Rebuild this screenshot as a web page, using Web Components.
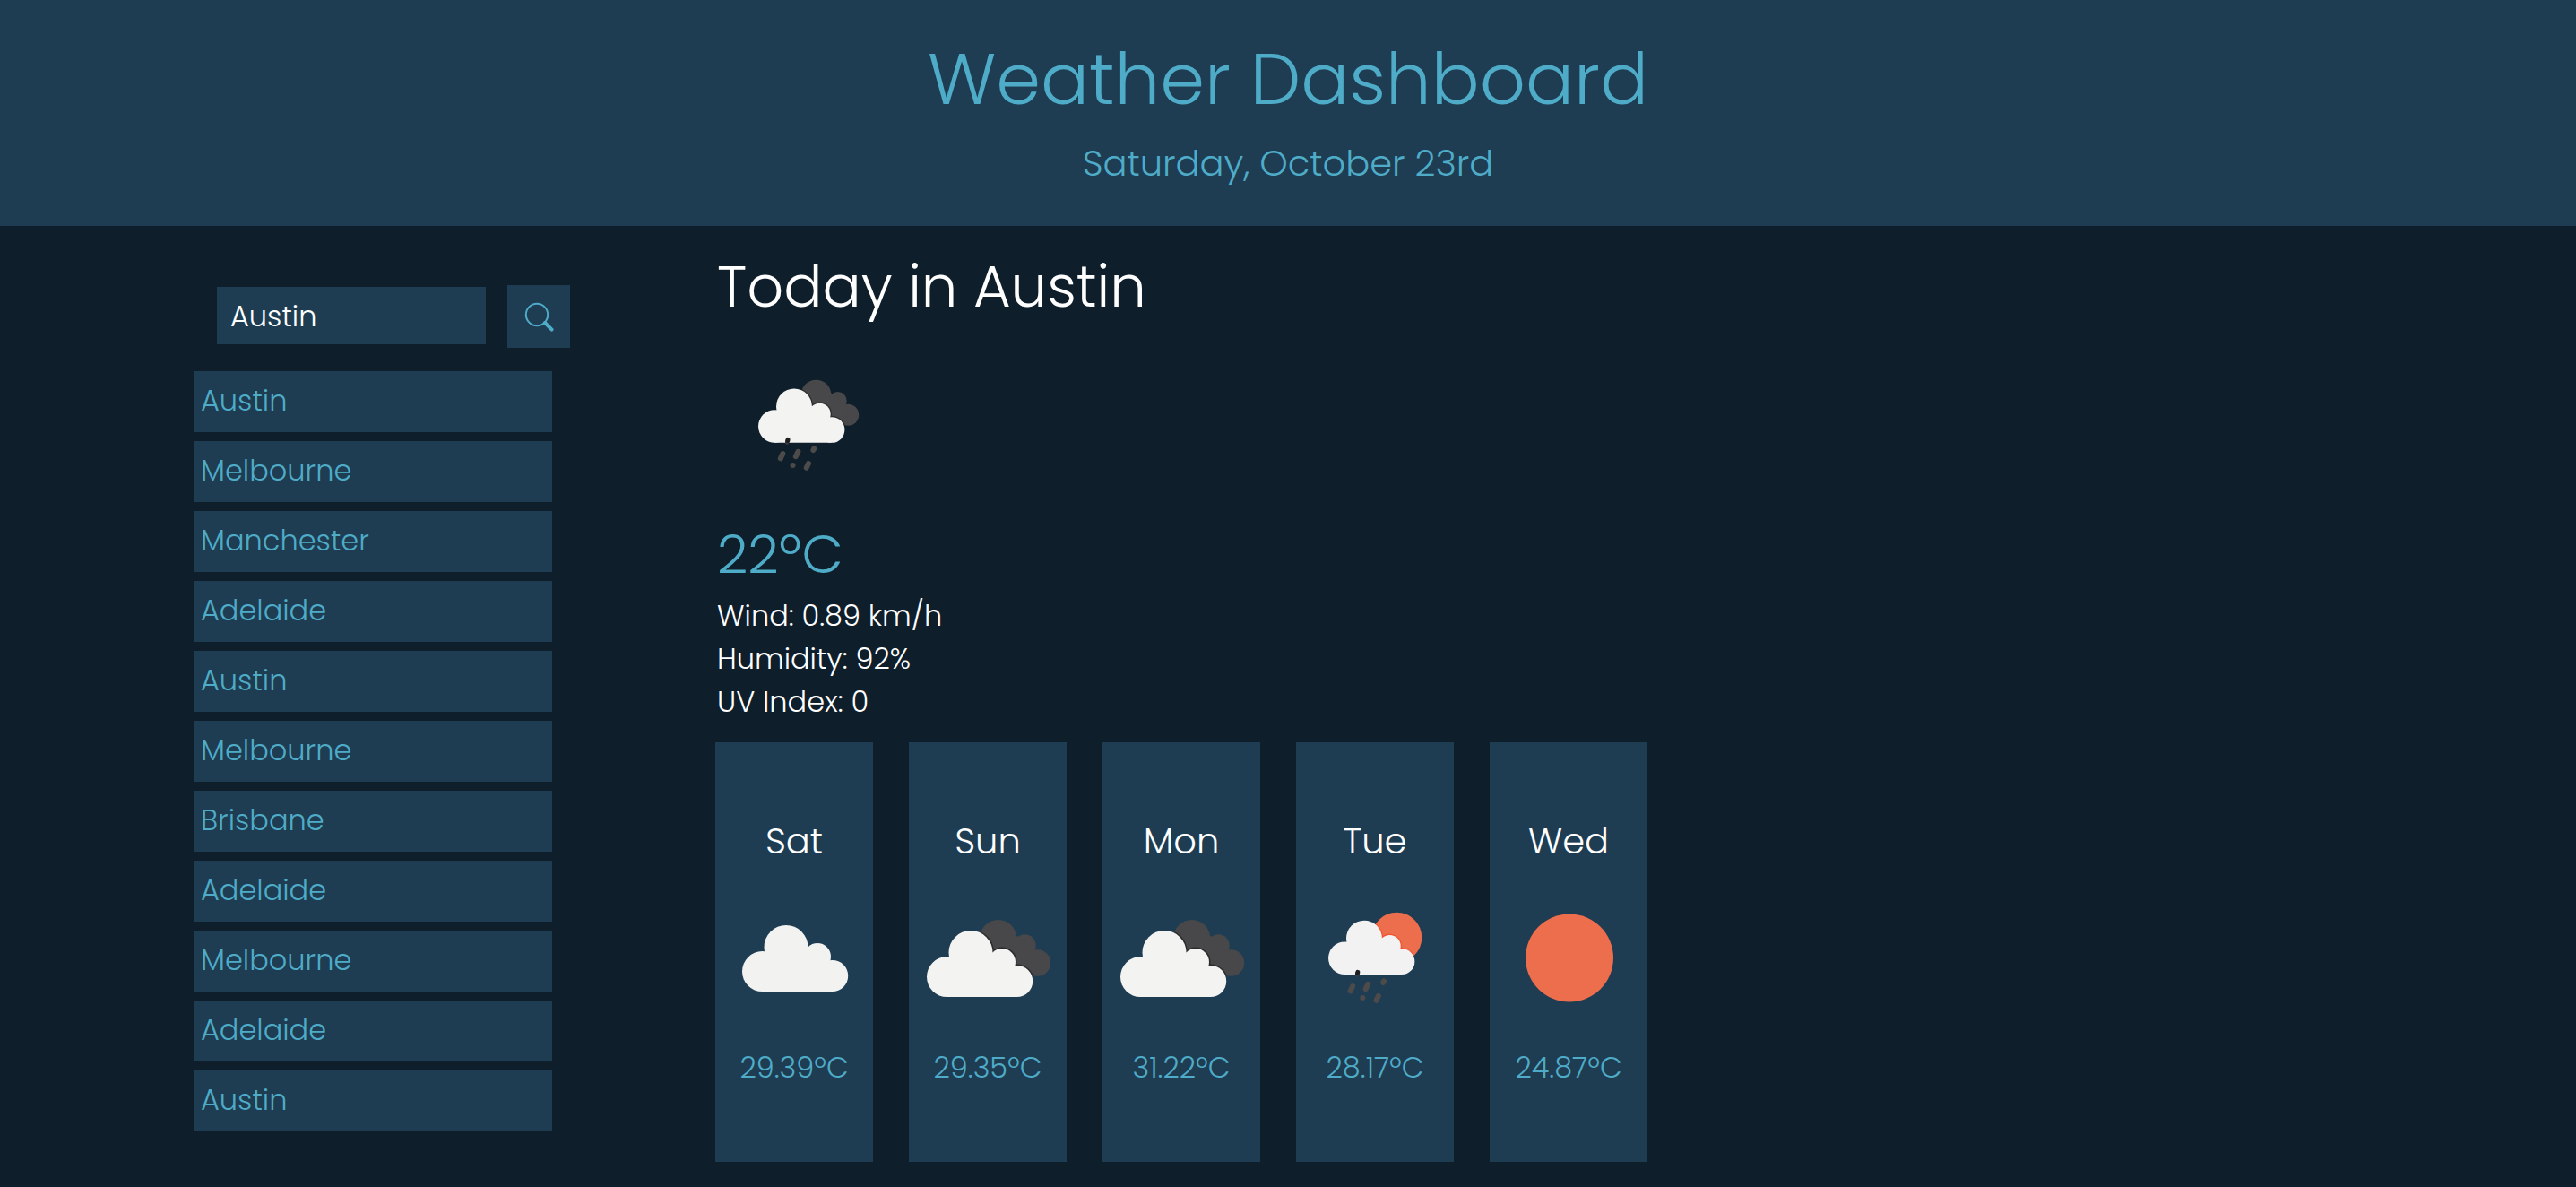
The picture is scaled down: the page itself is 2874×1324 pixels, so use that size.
<!DOCTYPE html>
<html lang="en">
<head>
<meta charset="utf-8">
<title>Weather Dashboard</title>
<style>
  :root {
    --ink: #0e1e2a;
    --panel: #1e3d52;
    --accent: #4facc8;
    --text-xl: 80px;
    --text-lg: 64px;
    --text-md: 40px;
    --text-sm: 32px;
  }
  body {
    margin: 0;
    min-height: 100vh;
    background: var(--ink);
    color: #fff;
    font-family: Poppins, Inter, "Open Sans", sans-serif;
    font-weight: 300;
  }
</style>
</head>
<body>
<weather-app></weather-app>

<template id="t-app">
  <style>
    :host { display: block; }
    main { display: flex; align-items: flex-start; gap: 182px; padding: 0 216px 28px; }
  </style>
  <page-header day="Saturday, October 23rd">Weather Dashboard</page-header>
  <main>
    <city-sidebar></city-sidebar>
    <forecast-panel></forecast-panel>
  </main>
</template>

<template id="t-header">
  <style>
    :host { display: block; background: var(--panel); color: var(--accent); text-align: center; }
    header { padding: 30px 24px 40px; }
    h1 { margin: 0; font-size: var(--text-xl); line-height: 116px; font-weight: 300; }
    p { margin: 6px 0 0; font-size: var(--text-md); line-height: 60px; }
  </style>
  <header><h1><slot></slot></h1><p></p></header>
</template>

<template id="t-sidebar">
  <style>
    :host { display: block; flex: 0 0 auto; width: 420px; margin-right: -20px; padding-top: 66px; }
    form { display: flex; align-items: flex-start; gap: 24px; margin: 0 0 26px 26px; }
    input {
      flex: 1; min-width: 0; height: 64px; box-sizing: border-box; margin: 2px 0 0; padding: 2px 15px 0;
      border: 0; border-radius: 0; background: var(--panel); color: #fff;
      font: inherit; font-size: var(--text-sm);
    }
    button.search {
      display: flex; align-items: center; justify-content: center;
      width: 70px; height: 70px; padding: 0; border: 0; background: var(--panel); color: var(--accent);
    }
    ul { display: flex; flex-direction: column; gap: 10px; width: 400px; margin: 0; padding: 0; list-style: none; }
  </style>
  <form>
    <input id="city" type="text" value="Austin" aria-label="City">
    <button class="search" type="button" aria-label="Search">
      <svg width="36" height="36" viewBox="0 0 36 36" fill="none" stroke="currentColor" stroke-linecap="round">
        <circle cx="16" cy="16" r="12.2" stroke-width="2"/>
        <path d="M25 25 L32.6 32.6" stroke-width="4"/>
        <path d="M24 25.6 L25.6 24" stroke-width="2"/>
      </svg>
    </button>
  </form>
  <ul></ul>
</template>

<template id="t-city">
  <style>
    :host { display: block; }
    button {
      display: block; width: 100%; height: 68px; padding: 0 8px 2px; border: 0;
      background: var(--panel); color: var(--accent); text-align: left;
      font: inherit; font-size: var(--text-sm);
    }
  </style>
  <button type="button"><slot></slot></button>
</template>

<template id="t-forecast">
  <style>
    :host { display: block; flex: 1; min-width: 0; }
    .now { padding: 22px 2px 0; }
    h2 { margin: 0 0 8px; font-size: var(--text-lg); line-height: 92px; font-weight: 300; }
    .now weather-icon { width: 200px; }
    .temp { margin: 0; color: var(--accent); font-size: 60px; line-height: 89px; }
    ul { margin: 0; padding: 0; list-style: none; font-size: var(--text-sm); line-height: 48px; }
    .week { display: flex; gap: 40px; margin-top: 21px; }
  </style>
  <section class="now">
    <h2>Today in Austin</h2>
    <weather-icon kind="rain"></weather-icon>
    <p class="temp">22ºC</p>
    <ul><li>Wind: 0.89 km/h</li><li>Humidity: 92%</li><li>UV Index: 0</li></ul>
  </section>
  <section class="week"></section>
</template>

<template id="t-day">
  <style>
    :host { display: flex; flex-direction: column; align-items: center; width: 176px; height: 468px; background: var(--panel); }
    h3 { margin: 80px 0 0; font-size: var(--text-md); line-height: 60px; font-weight: 300; }
    p { margin: 0; color: var(--accent); font-size: var(--text-sm); line-height: 46px; }
    weather-icon { width: 200px; }
  </style>
  <h3></h3>
  <weather-icon></weather-icon>
  <p></p>
</template>

<script>
  const stamp = (host, id) => {
    const root = host.attachShadow({ mode: 'open' });
    root.append(document.getElementById(id).content.cloneNode(true));
    return root;
  };

  const CLOUD = `<circle cx="91" cy="88.5" r="24.5"/><circle cx="64.5" cy="115.6" r="22.5"/>
    <circle cx="126" cy="99" r="15"/><circle cx="142.6" cy="120.5" r="17.6"/>
    <path d="M67 94 H115 L128 100 L142 110 V138 H64 Z"/>`;
  const DARK = `<circle cx="111.7" cy="78.6" r="20.6"/><circle cx="141.3" cy="86.7" r="12.4"/>
    <circle cx="155.5" cy="106" r="14.7"/><path d="M96 76 H132 L145 84 L154 96 V112 H96 Z"/>`;
  const DROPS = `<g fill="none" stroke="#4d4a4a" stroke-width="6" stroke-linecap="round">
    <path d="M73.3 132 L70.8 137.4 M90.4 129.8 L87.8 135.2 M108.2 126.4 L107.4 128 M84.5 145 V145.1 M102 143 L99.7 147.8"/>
    <path d="M78.9 117 L78.1 119.6" stroke="#3a3b3d" stroke-width="4.4"/><path d="M79 116.4 L78.8 117.4" stroke="#1e1f20" stroke-width="5"/></g>`;
  const white = (t, f) => `<g transform="${t}" fill="${f}">${CLOUD}</g>`;
  const edge = (t, c) => `<g transform="${t}" fill="${c}" stroke="${c}" stroke-width="3">${CLOUD}</g>`;
  const clip = (shape) => `<clipPath id="c">${shape}</clipPath>`;

  const ICONS = {
    cloud: white('', '#f2f2f0'),
    clouds: clip(DARK) + `<g fill="#48484a">${DARK}</g><g clip-path="url(#c)">${edge('translate(-10 6)', '#2b2b2d')}</g>`
      + white('translate(-10 6)', '#f3f3f2'),
    rain: clip(DARK) + `<g transform="translate(19.5 2.4) scale(.815)"><g fill="#48484a">${DARK}</g>
      <g clip-path="url(#c)">${edge('translate(-9.4 6)', '#2b2b2d')}</g></g>`
      + white('translate(11.8 7.3) scale(.815)', '#f3f3f2') + DROPS,
    sunrain: clip('<circle cx="124.3" cy="77.7" r="28"/>') + `<circle cx="124.3" cy="77.7" r="28" fill="#ec6e4c"/>
      <g clip-path="url(#c)">${edge('translate(13.8 6.5) scale(.815)', '#f05230')}</g>`
      + white('translate(13.8 6.5) scale(.815)', '#f2f2f2') + `<g transform="translate(1.8 0)">${DROPS}</g>`,
    sun: '<circle cx="101" cy="100.5" r="49" fill="#ec6e4c"/>'
  };

  customElements.define('weather-icon', class extends HTMLElement {
    static observedAttributes = ['kind'];
    constructor() { super(); this.attachShadow({ mode: 'open' }); }
    attributeChangedCallback(name, old, kind) {
      this.shadowRoot.innerHTML = `<style>:host{display:block;flex:none}svg{display:block;width:100%}</style>
        <svg viewBox="0 0 200 200" aria-hidden="true">${ICONS[kind] || ''}</svg>`;
    }
  });

  customElements.define('page-header', class extends HTMLElement {
    connectedCallback() { stamp(this, 't-header').querySelector('p').textContent = this.getAttribute('day'); }
  });

  customElements.define('city-item', class extends HTMLElement {
    connectedCallback() { stamp(this, 't-city'); }
  });

  customElements.define('city-sidebar', class extends HTMLElement {
    connectedCallback() {
      const list = stamp(this, 't-sidebar').querySelector('ul');
      for (const name of ['Austin', 'Melbourne', 'Manchester', 'Adelaide', 'Austin', 'Melbourne',
        'Brisbane', 'Adelaide', 'Melbourne', 'Adelaide', 'Austin']) {
        const li = document.createElement('li');
        const item = document.createElement('city-item');
        item.textContent = name;
        li.append(item);
        list.append(li);
      }
    }
  });

  customElements.define('day-card', class extends HTMLElement {
    connectedCallback() {
      const root = stamp(this, 't-day');
      root.querySelector('h3').textContent = this.getAttribute('day');
      root.querySelector('weather-icon').setAttribute('kind', this.getAttribute('kind'));
      root.querySelector('p').textContent = this.getAttribute('temp');
    }
  });

  customElements.define('forecast-panel', class extends HTMLElement {
    connectedCallback() {
      const week = stamp(this, 't-forecast').querySelector('.week');
      for (const [day, kind, temp] of [['Sat', 'cloud', '29.39ºC'], ['Sun', 'clouds', '29.35ºC'],
        ['Mon', 'clouds', '31.22ºC'], ['Tue', 'sunrain', '28.17ºC'], ['Wed', 'sun', '24.87ºC']]) {
        const card = document.createElement('day-card');
        card.setAttribute('day', day);
        card.setAttribute('kind', kind);
        card.setAttribute('temp', temp);
        week.append(card);
      }
    }
  });

  customElements.define('weather-app', class extends HTMLElement {
    connectedCallback() { stamp(this, 't-app'); }
  });
</script>
</body>
</html>
